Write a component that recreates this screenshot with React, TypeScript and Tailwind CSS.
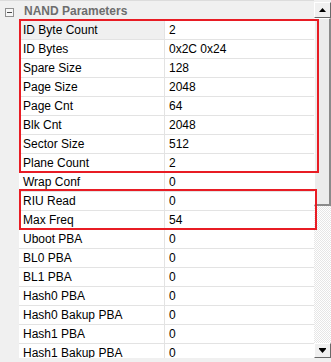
const rows: [string, string][] = [
  ["ID Byte Count", "2"],
  ["ID Bytes", "0x2C 0x24"],
  ["Spare Size", "128"],
  ["Page Size", "2048"],
  ["Page Cnt", "64"],
  ["Blk Cnt", "2048"],
  ["Sector Size", "512"],
  ["Plane Count", "2"],
  ["Wrap Conf", "0"],
  ["RIU Read", "0"],
  ["Max Freq", "54"],
  ["Uboot PBA", "0"],
  ["BL0 PBA", "0"],
  ["BL1 PBA", "0"],
  ["Hash0 PBA", "0"],
  ["Hash0 Bakup PBA", "0"],
  ["Hash1 PBA", "0"],
  ["Hash1 Bakup PBA", "0"],
];

function ScrollButton({ down }: { down?: boolean }) {
  return (
    <div className="flex items-center justify-center bg-[#f0f0f0] border-t border-l border-white border-r border-b border-r-[#696969] border-b-[#696969] h-full">
      <svg width="7" height="5" viewBox="0 0 7 5">
        {down ? (
          <>
            <rect x="0" y="0" width="7" height="1" fill="#000" />
            <polygon points="0,1 7,1 3.5,5" fill="#000" />
          </>
        ) : (
          <polygon points="3.5,0 7,4 0,4" fill="#000" />
        )}
      </svg>
    </div>
  );
}

export default function App() {
  return (
    <div className="w-[331px] h-[362px] bg-[#f0f0f0] overflow-hidden flex flex-col font-['Liberation_Sans',Arial,sans-serif] text-[12px] text-black">
      <div className="relative flex h-[358px] shrink-0">
        <div className="w-[314px] flex flex-col overflow-hidden">
          <div className="h-[21px] shrink-0 flex items-center border-t border-[#dcdcdc]">
            <div className="ml-[5px] w-[9px] h-[9px] mt-[2px] border border-[#919191] bg-[#f7f7f7] flex items-center justify-center">
              <div className="w-[5px] h-px bg-[#4a4a4a]" />
            </div>
            <span className="ml-[10px] font-bold text-[#6d6d6d] leading-none">NAND Parameters</span>
          </div>
          {rows.map(([name, value], i) => (
            <div key={name} className="flex h-[19px] shrink-0">
              <div className="w-[19px] shrink-0 bg-[#f0f0f0]" />
              <div
                className={`w-[146px] shrink-0 border-r border-b border-[#e3e3e3] pl-[4px] leading-[18px] whitespace-nowrap ${i === 0 ? "bg-[#f0f0f0]" : "bg-white"}`}
              >
                {name}
              </div>
              <div className="flex-1 bg-white border-b border-[#e3e3e3] pl-[4px] leading-[18px] whitespace-nowrap">
                {value}
              </div>
            </div>
          ))}
        </div>

        <div className="w-[17px] flex flex-col">
          <div className="h-[2px] shrink-0" />
          <div className="h-[16px] shrink-0">
            <ScrollButton />
          </div>
          <div className="h-[188px] shrink-0 bg-[#ececec] border-t border-l border-white border-r-2 border-b-2 border-r-[#8a8a8a] border-b-[#8a8a8a]" />
          <div className="flex-1 bg-[repeating-conic-gradient(#ffffff_0%_25%,#e6e6e6_0%_50%)] bg-[length:2px_2px]" />
          <div className="h-[15px] shrink-0">
            <ScrollButton down />
          </div>
        </div>

        <div className="absolute left-[19px] top-[19px] w-[300px] h-[154px] border-2 border-[#e81c24]" />
        <div className="absolute left-[19px] top-[189px] w-[298px] h-[41px] border-2 border-[#e81c24]" />
      </div>
    </div>
  );
}
